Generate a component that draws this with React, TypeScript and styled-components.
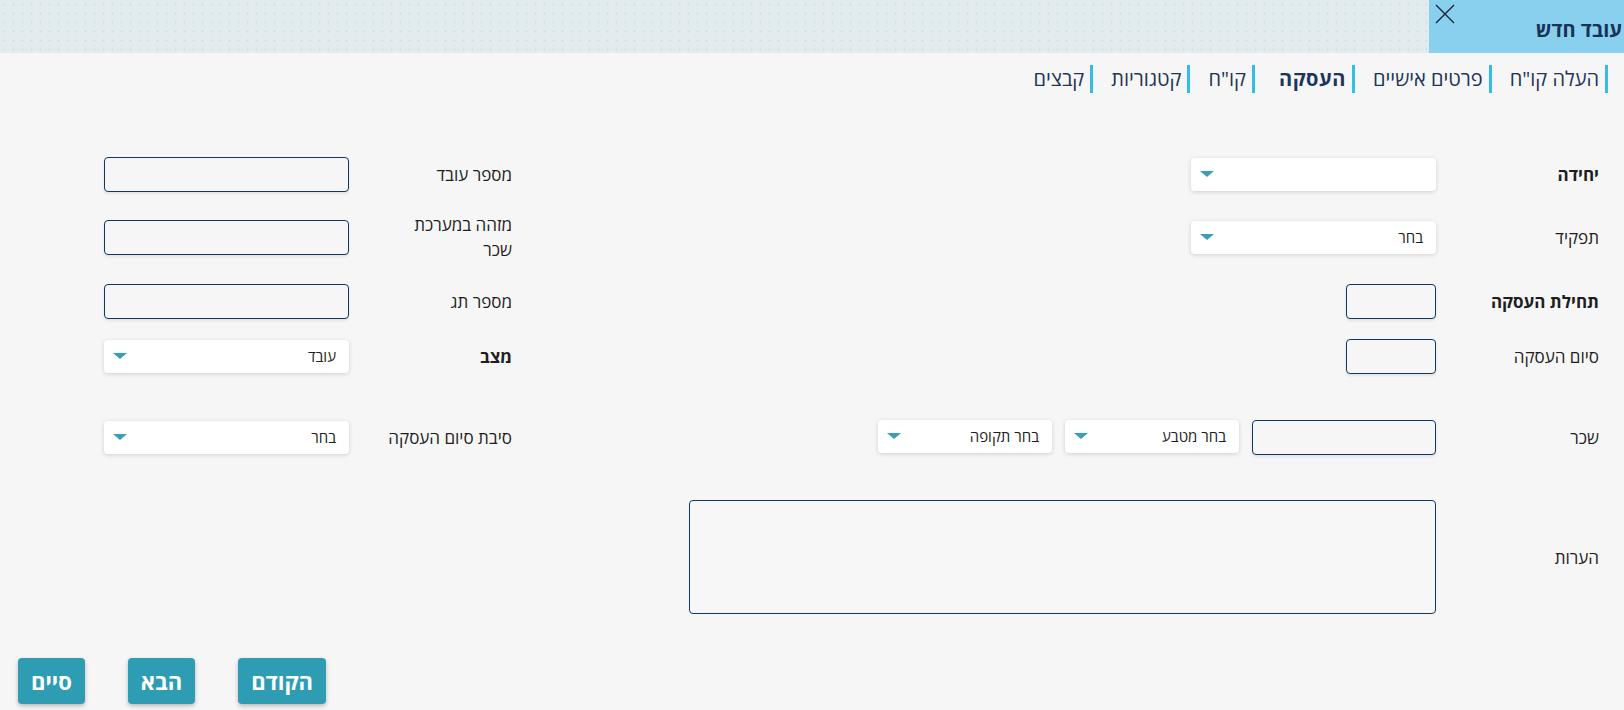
import styled, { createGlobalStyle } from "styled-components";

const GlobalStyle = createGlobalStyle`
  html, body {
    margin: 0;
    padding: 0;
    background: #f6f6f6;
  }
  body {
    font-family: "Open Sans", "DejaVu Sans", sans-serif;
    color: #1e1e1e;
  }
  * {
    box-sizing: border-box;
  }
`;

const tabs = ["העלה קו\"ח", "פרטים אישיים", "העסקה", "קו\"ח", "קטגוריות", "קבצים"];

function CloseIcon() {
  return (
    <svg width="20" height="20" viewBox="0 0 20 20">
      <path d="M1 1 L19 19 M19 1 L1 19" stroke="#1a2433" strokeWidth="1.4" fill="none" />
    </svg>
  );
}

function Select({ value, width = 245 }: { value?: string; width?: number }) {
  return (
    <SelectBox $width={width}>
      <span>{value}</span>
      <Arrow />
    </SelectBox>
  );
}

export default function App() {
  return (
    <>
      <GlobalStyle />
      <Page dir="rtl">
        <Header>
          <TitleBox>
            <Title>עובד חדש</Title>
            <CloseButton>
              <CloseIcon />
            </CloseButton>
          </TitleBox>
        </Header>

        <Tabs>
          {tabs.map((t) => (
            <Tab key={t} $active={t === "העסקה"}>
              {t}
            </Tab>
          ))}
        </Tabs>

        <Form>
          <Row $top={64}>
            <Field>
              <Label $bold>יחידה</Label>
              <Select />
            </Field>
            <Field>
              <Label>מספר עובד</Label>
              <Input />
            </Field>
          </Row>

          <Row $top={29}>
            <Field>
              <Label>תפקיד</Label>
              <Select value="בחר" />
            </Field>
            <Field>
              <Label $narrow>מזהה במערכת שכר</Label>
              <Input />
            </Field>
          </Row>

          <Row $top={30}>
            <Field>
              <Label $bold>תחילת העסקה</Label>
              <Input $width={90} />
            </Field>
            <Field>
              <Label>מספר תג</Label>
              <Input />
            </Field>
          </Row>

          <Row $top={21}>
            <Field>
              <Label>סיום העסקה</Label>
              <Input $width={90} />
            </Field>
            <Field>
              <Label $bold>מצב</Label>
              <Select value="עובד" />
            </Field>
          </Row>

          <Row $top={47}>
            <Field>
              <Label>שכר</Label>
              <Controls>
                <Input $width={184} />
                <Select value="בחר מטבע" width={174} />
                <Select value="בחר תקופה" width={174} />
              </Controls>
            </Field>
            <Field>
              <Label>סיבת סיום העסקה</Label>
              <Select value="בחר" />
            </Field>
          </Row>

          <Row $top={46} $tall>
            <Field>
              <Label>הערות</Label>
              <Notes />
            </Field>
          </Row>
        </Form>

        <Buttons>
          <Button>הקודם</Button>
          <Button>הבא</Button>
          <Button>סיים</Button>
        </Buttons>
      </Page>
    </>
  );
}

const Page = styled.div`
  min-height: 710px;
  background: #f6f6f6;
`;
const Header = styled.header`
  height: 53px;
  display: flex;
  background-color: #e2ecef;
  background-image: radial-gradient(circle, #cddbe3 0.8px, transparent 1.2px);
  background-size: 9px 9px;
`;
const TitleBox = styled.div`
  width: 195px;
  background: #89d0ee;
  display: flex;
  justify-content: space-between;
  align-items: flex-start;
  padding: 0 2px 0 0;
`;
const Title = styled.h1`
  margin: 16px 0 0;
  font-size: 20px;
  line-height: 27px;
  font-weight: 700;
  color: #173356;
  white-space: nowrap;
`;
const CloseButton = styled.div`
  margin: 4px 0 0 6px;
  width: 20px;
  height: 20px;
`;
const Tabs = styled.nav`
  display: flex;
  padding: 12px 16px 0 0;
`;
const Tab = styled.div<{ $active?: boolean }>`
  height: 28px;
  line-height: 28px;
  border-right: 3px solid #35bde3;
  padding-right: 6px;
  margin-left: ${(p) => (p.$active ? 24 : 18)}px;
  font-size: 20px;
  font-weight: ${(p) => (p.$active ? 700 : 400)};
  letter-spacing: ${(p) => (p.$active ? 0.6 : 0)}px;
  color: #1d3557;
  white-space: nowrap;
`;
const Form = styled.div`
  padding: 0 25px 0 104px;
`;
const Row = styled.div<{ $top: number; $tall?: boolean }>`
  display: flex;
  justify-content: space-between;
  align-items: center;
  margin-top: ${(p) => p.$top}px;
  height: ${(p) => (p.$tall ? 114 : 34)}px;
`;
const Field = styled.div`
  display: flex;
  align-items: center;
`;
const Label = styled.label<{ $bold?: boolean; $narrow?: boolean }>`
  width: 163px;
  flex-shrink: 0;
  padding-left: ${(p) => (p.$narrow ? 40 : 0)}px;
  font-size: 17px;
  line-height: 25px;
  font-weight: ${(p) => (p.$bold ? 700 : 400)};
  color: #1e1e1e;
`;
const Controls = styled.div`
  display: flex;
  gap: 13px;
`;
const Input = styled.div<{ $width?: number }>`
  width: ${(p) => p.$width ?? 245}px;
  height: 35px;
  border: 1px solid #0d3a63;
  border-radius: 4px;
  background: #f6f6f6;
  box-shadow: 0 2px 3px rgba(0, 0, 0, 0.08);
`;
const SelectBox = styled.div<{ $width: number }>`
  width: ${(p) => p.$width}px;
  height: 33px;
  background: #fff;
  border-radius: 4px;
  box-shadow: 0 1px 4px rgba(0, 0, 0, 0.16);
  display: flex;
  align-items: center;
  justify-content: space-between;
  padding: 0 13px 0 9px;
  font-size: 15px;
  color: #1e1e1e;
`;
const Arrow = styled.span`
  width: 0;
  height: 0;
  border-left: 7px solid transparent;
  border-right: 7px solid transparent;
  border-top: 6px solid #3a9fb5;
`;
const Notes = styled.div`
  width: 747px;
  height: 114px;
  border: 1px solid #0d3a63;
  border-radius: 4px;
  background: #f7f7f7;
`;
const Buttons = styled.div`
  display: flex;
  justify-content: flex-end;
  gap: 43px;
  padding: 44px 0 0 18px;
`;
const Button = styled.button`
  height: 46px;
  padding: 0 13px;
  border: none;
  border-radius: 4px;
  background: #2e9db4;
  color: #fff;
  font-family: inherit;
  font-size: 22px;
  font-weight: 700;
  box-shadow: 0 2px 4px rgba(0, 0, 0, 0.25);
`;
